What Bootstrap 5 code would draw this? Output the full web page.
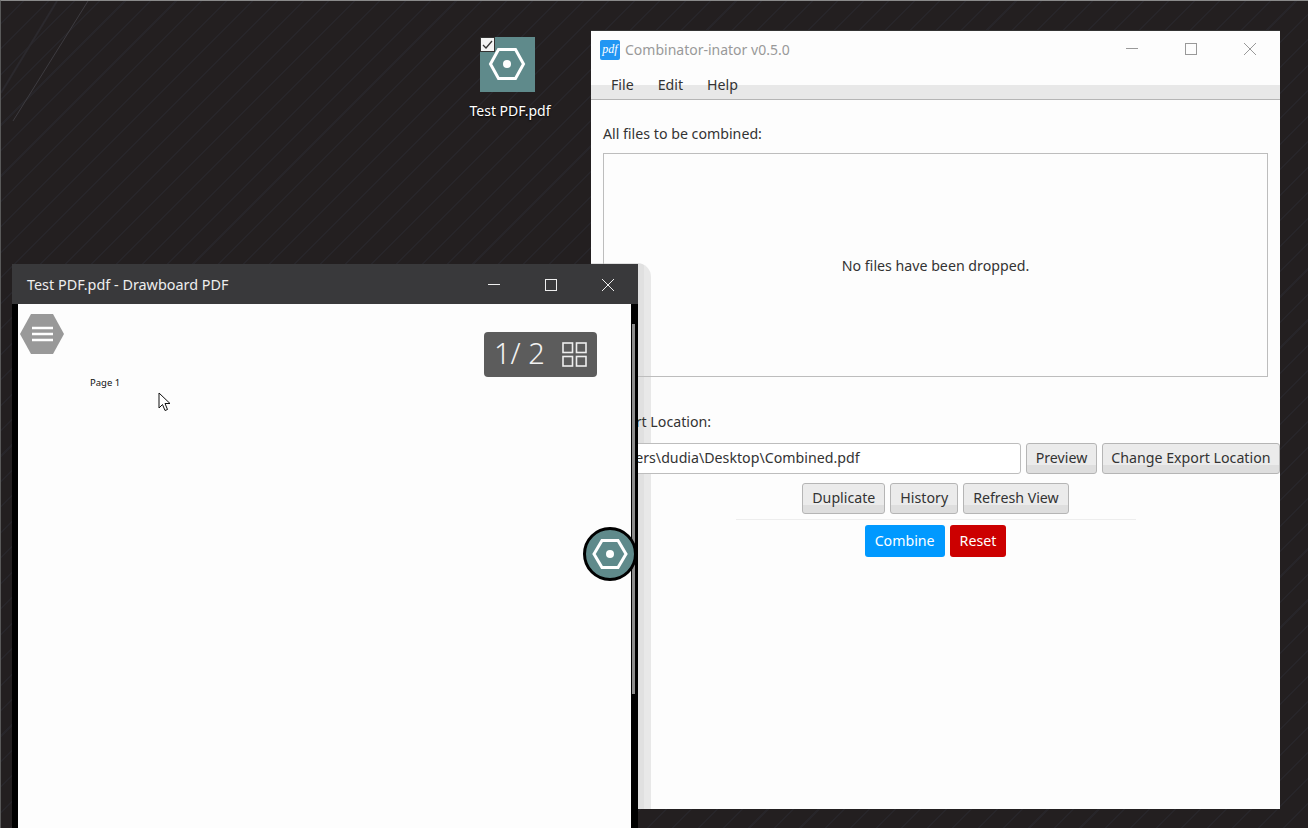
<!DOCTYPE html>
<html lang="en">
<head>
<meta charset="utf-8">
<title>Combinator-inator</title>
<link href="https://cdn.jsdelivr.net/npm/bootstrap@5.3.0/dist/css/bootstrap.min.css" rel="stylesheet">
<style>
html,body{height:100%;margin:0;overflow:hidden}
body{font-family:"Noto Sans","Open Sans",sans-serif;font-size:14.2px;color:#333}
.desk{position:relative;width:1308px;height:828px;overflow:hidden;background-color:#231f20;background-image:repeating-linear-gradient(-45deg,transparent 0 16.500px,#272529 16.500px 18px);border-top:1px solid #8a8a8a;border-left:1px solid #5a5a5a}
.scratch{position:absolute;left:0;top:0}
.desk-icon{position:absolute;left:468px;top:36px;width:82px;color:#fff;text-align:center;font-size:14px;text-shadow:0 1px 2px #000}
.icon-tile{width:55px;height:55px;background:#5f8a8b;margin:0 0 8px 11px;position:relative}
.tick{position:absolute;left:0;top:0;width:15px;height:15px;background:#f4f4f4;border:1px solid #333}
.app-win{position:absolute;left:590px;top:29px;width:689px;height:779px;background:#fdfdfd;border-top:1px solid #333;overflow:hidden}
.halo{position:absolute;left:0;top:232px;width:60px;height:560px;border-radius:0 14px 0 0;background:linear-gradient(90deg,#e0e0e0 0 53px,#e8e8e8 53px)}
.app-body{position:relative}
.app-title{height:39px;color:#999;padding:0 1px 0 9px;font-size:14px}
.app-title .caption{margin-top:-2px}
.app-title .win-ctl{height:35px;margin-bottom:4px}
.pdf-logo{width:20px;height:20px;margin:-2px 5px 0 0;border-radius:2px;background:#2196f3;color:#fff;font:italic 12px/19px "Liberation Serif",serif;text-align:center}
.win-ctl{width:59px}
.app-menu{height:30px;background:linear-gradient(#fdfdfd 0 15px,#e8e8e8 15px);border-bottom:1px solid #b5b5b5;padding-left:8px}
.app-menu span{padding:0 12px;line-height:29px;color:#333}
.app-main{padding:23px 12px 0}
.list-zone{height:224px;border:1px solid #bdbdbd;margin-top:9px}
.loc-label{margin-top:34px}
.path-row{margin-top:10px;margin-right:-12px;gap:5px}
.path-field{height:31px;border:1px solid #bdbdbd;border-radius:3px;background:#fff;flex:1;margin-left:-12px;padding:0 0 0 8px;color:#333;line-height:28px;white-space:nowrap;overflow:hidden;position:relative}
.grey-btn{height:31px;padding:0 9px;border:1px solid #b5b5b5;border-radius:3px;background:linear-gradient(#ebebeb 0 21px,#dedede 21px);color:#333;font-size:14.2px;line-height:28px}
.path-row .grey-btn{padding:0 8.500px}
.tool-row{margin-top:9px;gap:5px}
.tint-row{gap:5px}
.tint-btn{height:32px;padding:0 10px;border:0;border-radius:3px;color:#fff;font-size:14.2px}
.tint-blue{background:#0099ff}
.tint-red{background:#cc0000}
.rule-line{width:400px;height:1px;background:#ededed;margin:5px auto 5px}
.front-win{position:absolute;left:11px;top:263px;width:626px;height:570px;background:#000;overflow:hidden}
.front-title{height:40px;background:#39393b;color:#eee;padding:1px 2px 0 15px;font-size:14.4px}
.front-title .win-ctl{width:57px;height:40px}
.sheet{position:absolute;left:6px;top:40px;width:613px;height:530px;background:#fdfdfd}
.scroll-thumb{position:absolute;left:620px;top:60px;width:3px;height:370px;background:#8c8c8c}
.page-tag{position:absolute;left:72px;top:72px;font-size:9.500px;color:#111;line-height:14px}
.burger{position:absolute;left:2px;top:10px}
.pager{position:absolute;left:466px;top:28px;width:113px;height:45px;background:#5c5c5c;border-radius:4px;color:#f2f2f2;font-size:29px;font-weight:300;padding-left:10px;gap:17px}
.pager span{margin-top:-4px}
.fab{position:absolute;left:581px;top:525px;width:56px;height:56px}
.arrow{position:absolute;left:140px;top:88px}
</style>
</head>
<body>
<div class="desk">
  <svg class="scratch" width="120" height="130"><path d="M12 120 87 0" stroke="#3d3b3f" stroke-width="1" fill="none"/><path d="M0 92 56 0" stroke="#2b292d" stroke-width="2" fill="none"/></svg>

  <div class="desk-icon">
    <div class="icon-tile">
      <svg width="55" height="55" viewBox="0 0 55 55"><path d="M10.500 27 18.500 12.500h17L43.500 27l-8 14.500h-17z" fill="none" stroke="#fff" stroke-width="3"/><circle cx="27" cy="27" r="4" fill="#fff"/></svg>
      <div class="tick"><svg class="d-block" width="13" height="13" viewBox="0 0 13 13"><path d="M2 7l3 3 6-7" fill="none" stroke="#333" stroke-width="1.300"/></svg></div>
    </div>
    <div>Test PDF.pdf</div>
  </div>

  <div class="app-win">
    <div class="halo"></div>
    <div class="app-body">
      <div class="app-title d-flex align-items-center">
        <div class="pdf-logo">pdf</div>
        <div class="caption flex-grow-1">Combinator-inator v0.5.0</div>
        <div class="win-ctl d-flex align-items-center justify-content-center"><svg width="14" height="14"><path d="M1 6.500h12" stroke="#999"/></svg></div>
        <div class="win-ctl d-flex align-items-center justify-content-center"><svg width="14" height="14"><rect x="1.500" y="1.500" width="11" height="11" fill="none" stroke="#999"/></svg></div>
        <div class="win-ctl d-flex align-items-center justify-content-center"><svg width="14" height="14"><path d="M1 1l12 12M13 1 1 13" stroke="#999"/></svg></div>
      </div>
      <div class="app-menu d-flex"><span>File</span><span>Edit</span><span>Help</span></div>
      <div class="app-main">
        <div>All files to be combined:</div>
        <div class="list-zone d-flex align-items-center justify-content-center">No files have been dropped.</div>
        <div class="loc-label">Export Location:</div>
        <div class="path-row d-flex">
          <div class="path-field">C:\Users\dudia\Desktop\Combined.pdf</div>
          <button class="grey-btn" type="button">Preview</button>
          <button class="grey-btn" type="button">Change Export Location</button>
        </div>
        <div class="tool-row d-flex justify-content-center">
          <button class="grey-btn" type="button">Duplicate</button>
          <button class="grey-btn" type="button">History</button>
          <button class="grey-btn" type="button">Refresh View</button>
        </div>
        <div class="rule-line"></div>
        <div class="tint-row d-flex justify-content-center">
          <button class="tint-btn tint-blue" type="button">Combine</button>
          <button class="tint-btn tint-red" type="button">Reset</button>
        </div>
      </div>
    </div>
  </div>

  <div class="front-win">
    <div class="front-title d-flex align-items-center">
      <div class="flex-grow-1">Test PDF.pdf - Drawboard PDF</div>
      <div class="win-ctl d-flex align-items-center justify-content-center"><svg width="14" height="14"><path d="M1 6.500h12" stroke="#eee"/></svg></div>
      <div class="win-ctl d-flex align-items-center justify-content-center"><svg width="14" height="14"><rect x="1.500" y="1.500" width="11" height="11" fill="none" stroke="#eee"/></svg></div>
      <div class="win-ctl d-flex align-items-center justify-content-center"><svg width="14" height="14"><path d="M1 1l12 12M13 1 1 13" stroke="#eee"/></svg></div>
    </div>
    <div class="sheet">
      <svg class="burger" width="44" height="40" viewBox="0 0 44 40"><path d="M11 0h22l11 20-11 20H11L0 20z" fill="#999"/><path d="M12 14h21M12 20h21M12 26h21" stroke="#fff" stroke-width="2.500"/></svg>
      <div class="page-tag">Page 1</div>
      <svg class="arrow" width="14" height="20" viewBox="0 0 14 20"><path d="M1 1v15l3.500-3.500 2.500 6 2.500-1-2.500-6h5z" fill="#fff" stroke="#111"/></svg>
      <div class="pager d-flex align-items-center">
        <span>1/ 2</span>
        <svg width="25" height="25" viewBox="0 0 25 25"><g fill="none" stroke="#eee" stroke-width="1.600"><rect x="1" y="1" width="9.500" height="9.500"/><rect x="14.500" y="1" width="9.500" height="9.500"/><rect x="1" y="14.500" width="9.500" height="9.500"/><rect x="14.500" y="14.500" width="9.500" height="9.500"/></g></svg>
      </div>
    </div>
    <div class="scroll-thumb"></div>
  </div>

  <svg class="fab" viewBox="0 0 56 56"><circle cx="28" cy="28" r="25.500" fill="#5f8a8b" stroke="#000" stroke-width="3"/><path d="M12 28 20 14.500h16L44 28l-8 13.500H20z" fill="none" stroke="#fff" stroke-width="3"/><circle cx="28" cy="28" r="4" fill="#fff"/></svg>
</div>
</body>
</html>
